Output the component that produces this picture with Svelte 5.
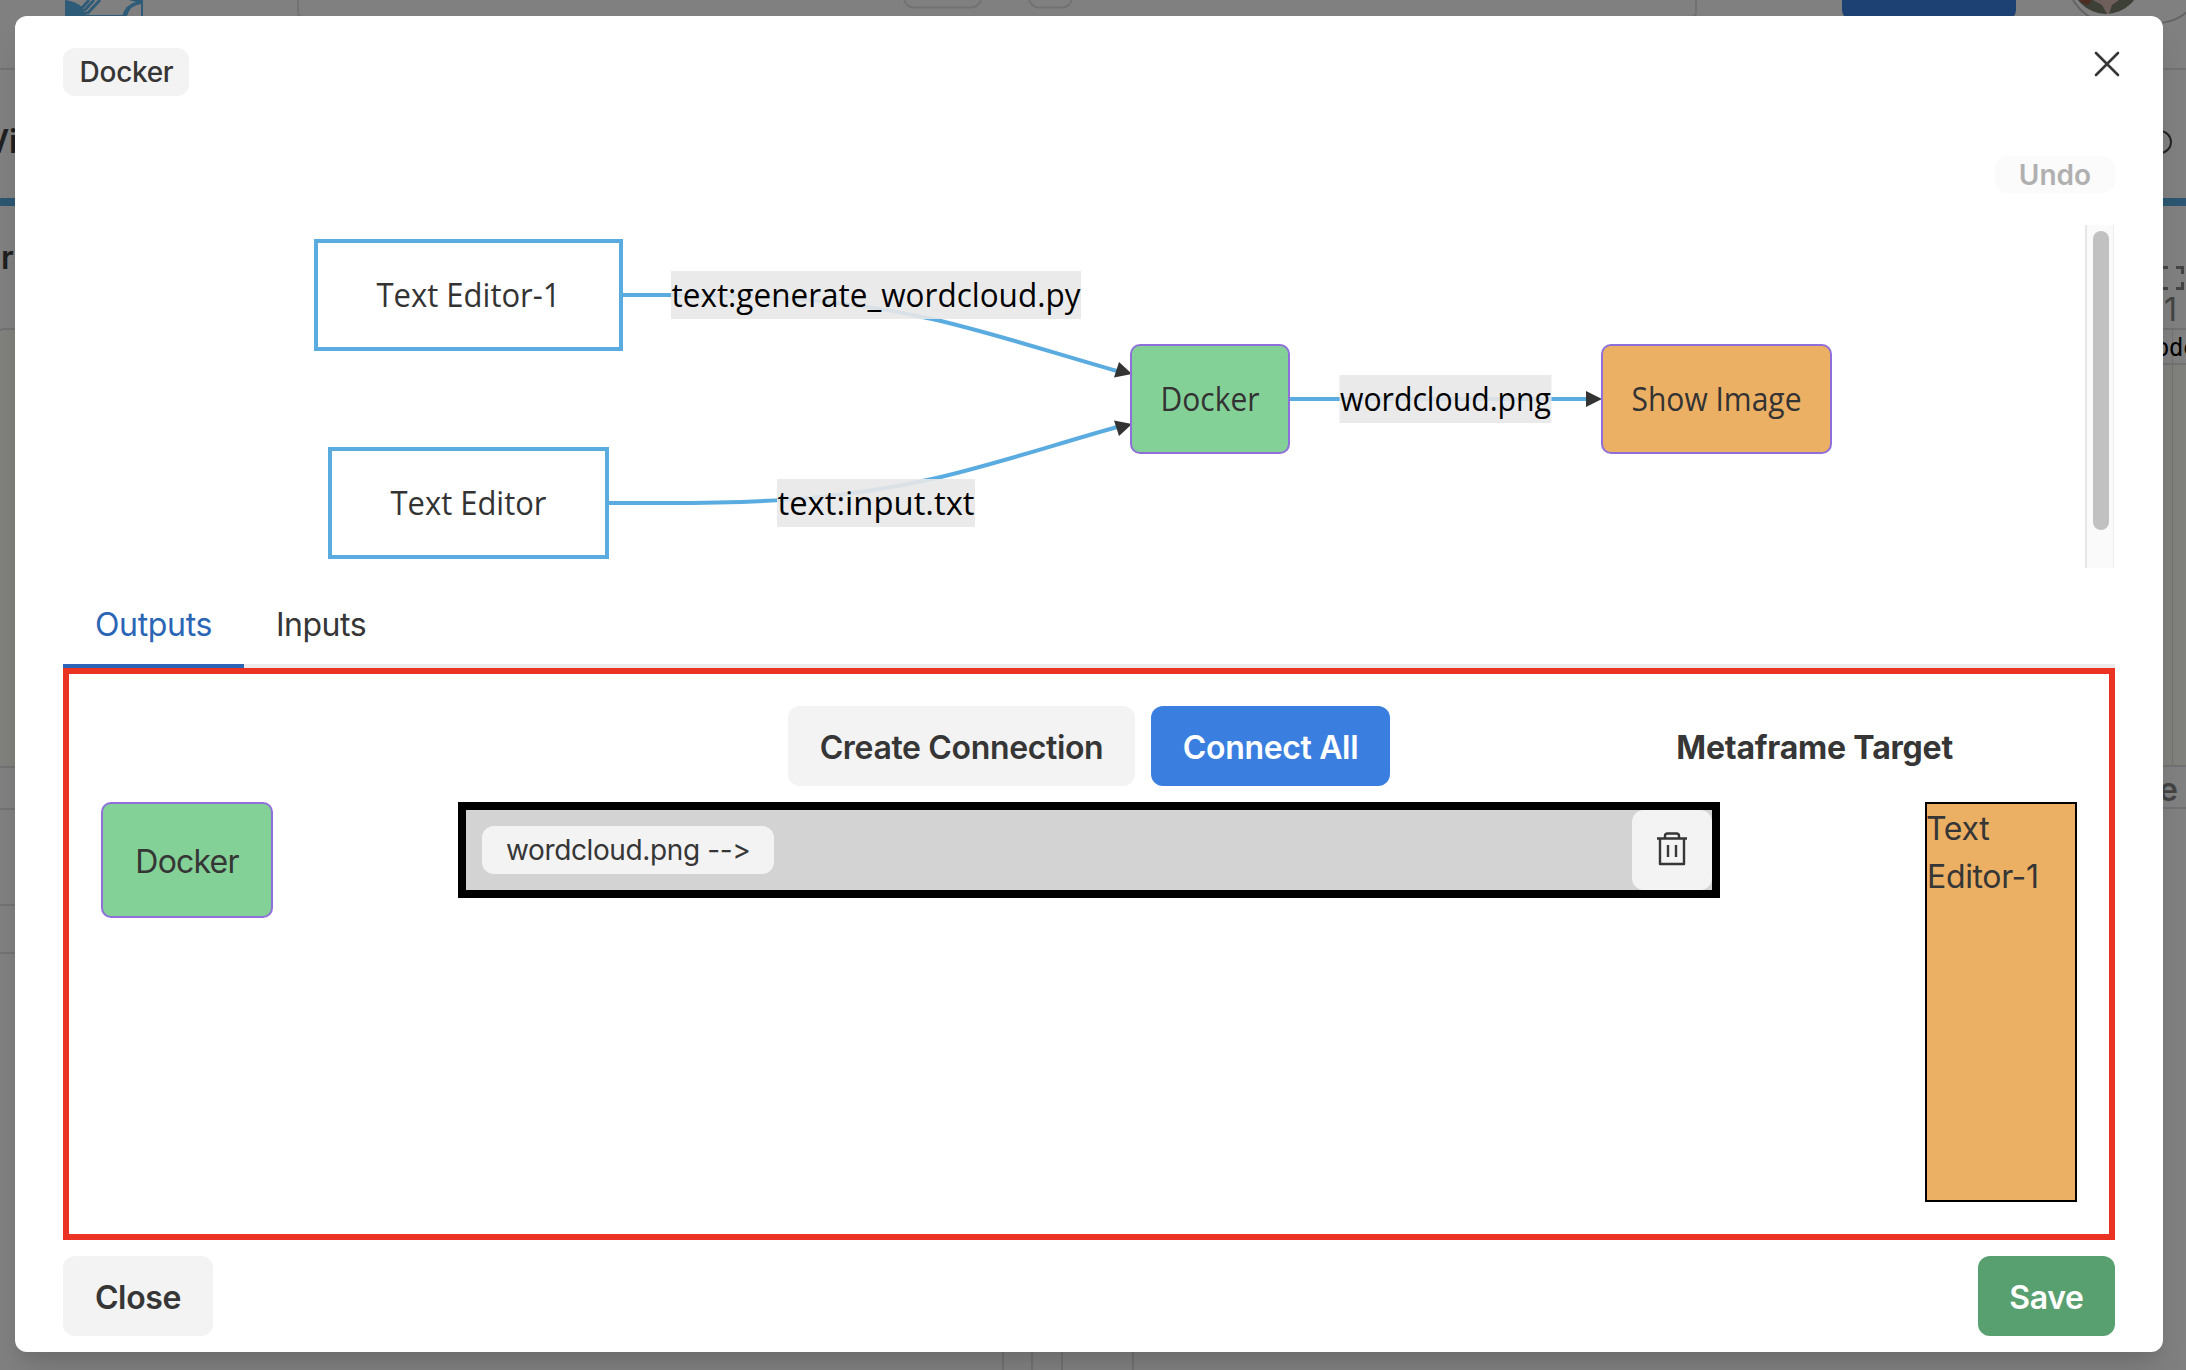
<script>
  const nodes = [
    { id: 'editor1', label: 'Text Editor-1', cls: 'plain', x: 314, y: 239, w: 309, h: 112, len: 184 },
    { id: 'editor', label: 'Text Editor', cls: 'plain', x: 328, y: 447, w: 281, h: 112, len: 156 },
    { id: 'docker', label: 'Docker', cls: 'green', x: 1130, y: 344, w: 160, h: 110, len: 99 },
    { id: 'image', label: 'Show Image', cls: 'orange', x: 1601, y: 344, w: 231, h: 110, len: 170 }
  ];
  const labels = [
    { text: 'text:generate_wordcloud.py', x: 671, y: 271, w: 410 },
    { text: 'text:input.txt', x: 777, y: 479, w: 198 },
    { text: 'wordcloud.png', x: 1339.5, y: 375, w: 212 }
  ];
</script>

<div class="screen">
  <svg class="page" viewBox="0 0 2186 1370" aria-hidden="true">
    <path d="M0 330H20V766H0ZM2150 365H2186V765H2150Z" fill="#80807d" />
    <g fill="none" stroke="#727272" stroke-width="2">
      <path d="M298 0V12Q298 17 303 17M1696 0V12Q1696 17 1690 17" />
      <path d="M0 69H2186M0 767H20M0 809H20M0 905H20M0 953H20" />
      <path d="M0 331Q1 329 4 329H20M1003 1352V1370M1032 1352V1370M1062 1352V1370M1133 1352V1370" />
      <path d="M2160 329H2186M2160 364H2186M2160 766H2186M2160 808H2186" />
      <path d="M2172.500 330V766" stroke-width="1" />
      <rect x="904" y="-30" width="77" height="37.500" rx="10" />
      <rect x="1029" y="-30" width="43" height="37.500" rx="10" />
    </g>
    <g fill="#2d5b78">
      <path d="M65 0Q76 1 83 8L84 12H88L85 16H65Z" />
      <path d="M122 16Q126 4 136 2L129 0H143V16H141V4Q130 5 127 16Z" />
      <path d="M84 15H124V16H84Z" />
    </g>
    <path d="M89 0L81 9M94 0L84 11M100 0L87 14" fill="none" stroke="#2d5b78" stroke-width="2.800" />
    <path d="M0 198H2186V206H0Z" fill="#2c5671" />
    <rect x="1842" y="-40" width="174" height="60" rx="10" fill="#1e4174" />
    <rect x="2067" y="-69" width="136" height="92" rx="46" fill="none" stroke="#636363" stroke-width="2" />
    <circle cx="2106" cy="-21" r="35" fill="#3d4037" />
    <path d="M2079 0H2092L2088 5Q2082 4 2079 0Z" fill="#4d2c22" />
    <path d="M2093 0H2119L2112 5L2109 14H2107L2102 5Z" fill="#6f5f5b" />
    <text x="-14" y="153" class="dim bold">Vi</text>
    <text x="1" y="269" class="dim bold">r</text>
    <circle cx="2160" cy="142" r="11" fill="none" stroke="#252525" stroke-width="2" />
    <path d="M2160 267.500H2168M2176 267.500H2182.500V274M2182.500 282V288.500H2176M2168 288.500H2160" fill="none" stroke="#444" stroke-width="3" />
    <text x="2164" y="321" class="dim">1</text>
    <text x="2155" y="356" class="mono">ode</text>
    <text x="2159" y="801" class="dim semi">e</text>
  </svg>

  <main class="modal">
    <header class="top">
      <span class="tag title">Docker</span>
      <svg class="x" viewBox="0 0 26 26" aria-label="Close"><path d="M2 2L24 24M24 2L2 24" /></svg>
    </header>
    <div class="undo-row"><button class="undo">Undo</button></div>

    <section class="graph">
      <svg viewBox="63 225 2052 343">
        <g class="edges">
          <path d="M622 295H664C760 295 838 298 932 319C990 332 1050 352 1117 371" />
          <path d="M608 503H664C760 503 838 500 932 479C990 466 1050 446 1117 427" />
          <path d="M1290 399H1588" />
        </g>
        <path class="arrow" d="M1132 374L1119 362L1114 377.5ZM1132 424L1119 436L1114 420.5ZM1602 399L1586 391V407Z" />
        {#each nodes as n (n.id)}
          {#if n.cls === 'plain'}
            <rect class="plain" x={n.x + 2} y={n.y + 2} width={n.w - 4} height={n.h - 4} />
          {:else}
            <rect class={n.cls} x={n.x + 1} y={n.y + 1} width={n.w - 2} height={n.h - 2} rx="9" />
          {/if}
          <text class="node" x={n.x + (n.w - n.len) / 2} y={n.y + n.h / 2 + 11.5} textLength={n.len} lengthAdjust="spacingAndGlyphs">{n.label}</text>
        {/each}
        {#each labels as l (l.text)}
          <rect class="label-bg" x={l.x} y={l.y} width={l.w} height="48" />
          <text class="label" x={l.x + 0.5} y={l.y + 35.5} textLength={l.w - 1} lengthAdjust="spacingAndGlyphs">{l.text}</text>
        {/each}
      </svg>
      <div class="track"><div class="thumb"></div></div>
    </section>

    <nav class="tabs">
      <span class="tab active">Outputs</span>
      <span class="tab inputs">Inputs</span>
    </nav>

    <section class="panel">
      <div class="actions">
        <div class="buttons">
          <button class="btn create">Create Connection</button>
          <button class="btn connect">Connect All</button>
        </div>
        <strong>Metaframe Target</strong>
      </div>
      <div class="mapping">
        <div class="source">Docker</div>
        <div class="pipe">
          <span class="tag file">wordcloud.png --&gt;</span>
          <button class="trash" aria-label="Delete">
            <svg viewBox="0 0 34 38">
              <path d="M2 8.500H32M5 8.500V34H29V8.500M10 8V6Q10 3.500 12.500 3.500H21.500Q24 3.500 24 6V8M13 15V27M21 15V27" />
            </svg>
          </button>
        </div>
        <div class="target">Text Editor-1</div>
      </div>
    </section>

    <footer>
      <button class="btn close">Close</button>
      <button class="btn save">Save</button>
    </footer>
  </main>
</div>

<style>
  :global(body) { background: #808080; overflow: hidden; }
  * { box-sizing: border-box; }
  .screen {
    position: relative; width: 2186px; height: 1370px; overflow: hidden;
    padding: 16px 23px 18px 15px; background: #808080; color: #363636;
    font: 400 32px/48px Inter, "Liberation Sans", sans-serif;
    font-variant-ligatures: none; font-feature-settings: "calt" 0; letter-spacing: -.35px;
  }
  .page { position: absolute; inset: 0; width: 2186px; height: 1370px; }
  .dim { font-size: 32px; fill: #444; }
  .semi { font-weight: 600; }
  .bold { font-weight: 600; fill: #202020; }
  .mono { font: 24px "DejaVu Sans Mono", monospace; fill: #000; }
  .modal {
    position: relative; display: flex; flex-direction: column; height: 1336px;
    padding: 32px 48px 16px; border-radius: 12px; background: #fff;
    box-shadow: 0 20px 30px -6px rgba(0, 0, 0, .12), 0 8px 12px -4px rgba(0, 0, 0, .06);
  }
  button { border: 0; padding: 0; font: inherit; color: inherit; letter-spacing: inherit; }
  .top { display: flex; justify-content: space-between; height: 108px; }
  .tag { height: 48px; border-radius: 12px; background: #f3f3f3; font-size: 28px; white-space: nowrap; }
  .title { width: 126px; padding-left: 1px; text-align: center; font-weight: 500; letter-spacing: -.3px; }
  .x { width: 26px; height: 26px; margin: 3px -5px 0 0; fill: none; stroke: #363636; stroke-width: 2.6; stroke-linecap: round; }
  .undo-row { display: flex; justify-content: flex-end; height: 69px; }
  .undo { width: 120px; height: 37px; padding-top: 2px; border-radius: 12px; background: #fbfbfb; color: #b0b0b0; font-size: 28px; font-weight: 600; line-height: 35px; letter-spacing: 0; }
  .graph { position: relative; height: 343px; }
  .graph > svg { display: block; width: 2052px; height: 343px; letter-spacing: 0; }
  .edges { fill: none; stroke: #5aabdf; stroke-width: 4; }
  .arrow { fill: #333; }
  .plain { fill: #fff; stroke: #5aabdf; stroke-width: 4; }
  .green { fill: #84d197; stroke: #8f70db; stroke-width: 2; }
  .orange { fill: #ebb063; stroke: #8f70db; stroke-width: 2; }
  .node, .label { font: 32px "Open Sans", sans-serif; fill: #333; }
  .label { fill: #000; }
  .label-bg { fill: rgba(232, 232, 232, .9); }
  .track {
    position: absolute; top: 0; right: 1px; width: 29px; height: 343px; padding: 6px 0 0 6px;
    background: #fafafa; border-left: 2px solid #e6e6e6; border-right: 1px solid #ededed;
  }
  .thumb { width: 16px; height: 299px; border-radius: 8px; background: #c1c1c1; }
  .tabs { display: flex; height: 100px; padding-top: 16px; border-bottom: 4px solid #ebebeb; }
  .tab { height: 84px; padding: 17px 32px 15px; line-height: 48px; }
  .inputs { letter-spacing: -.5px; }
  .active { width: 181px; color: #2b65b5; border-bottom: 4px solid #2b65b5; }
  .panel { height: 572px; padding: 32px; border: 6px solid #ea3323; }
  .actions { display: grid; grid-template-columns: 1fr 602px 1fr; height: 80px; margin-bottom: 16px; align-items: center; }
  .buttons { grid-column: 2; display: flex; gap: 16px; }
  .actions strong { padding: 3px 124px 0 0; font-weight: 700; justify-self: end; white-space: nowrap; letter-spacing: -.2px; }
  .btn { height: 80px; padding-top: 3px; border-radius: 12px; background: #f3f3f3; font-weight: 600; white-space: nowrap; }
  .create { width: 347px; }
  .connect { width: 239px; background: #3a7fe0; color: #fff; }
  .mapping { display: flex; justify-content: space-between; align-items: flex-start; }
  .source { width: 172px; height: 116px; border: 2px solid #8f70db; border-radius: 10px; background: #84d197; text-align: center; line-height: 115px; letter-spacing: -.8px; }
  .pipe { display: flex; align-items: center; justify-content: space-between; width: 1262px; height: 96px; margin-left: -20px; padding-left: 16px; border: 8px solid #000; background: #d3d3d3; }
  .file { width: 292px; padding-left: 24px; letter-spacing: -.38px; }
  .trash { width: 80px; height: 80px; border-radius: 12px; background: #f3f3f3; display: grid; place-items: center; }
  .trash svg { width: 34px; height: 38px; margin-top: -2px; fill: none; stroke: #363636; stroke-width: 2.4; stroke-linejoin: round; }
  .target { width: 152px; height: 400px; padding-top: 1px; border: 2px solid #000; background: #ebb063; text-indent: -1px; }
  footer { display: flex; justify-content: space-between; margin-top: 16px; }
  .close { width: 150px; }
  .save { width: 137px; background: #59a070; color: #fff; }
</style>
